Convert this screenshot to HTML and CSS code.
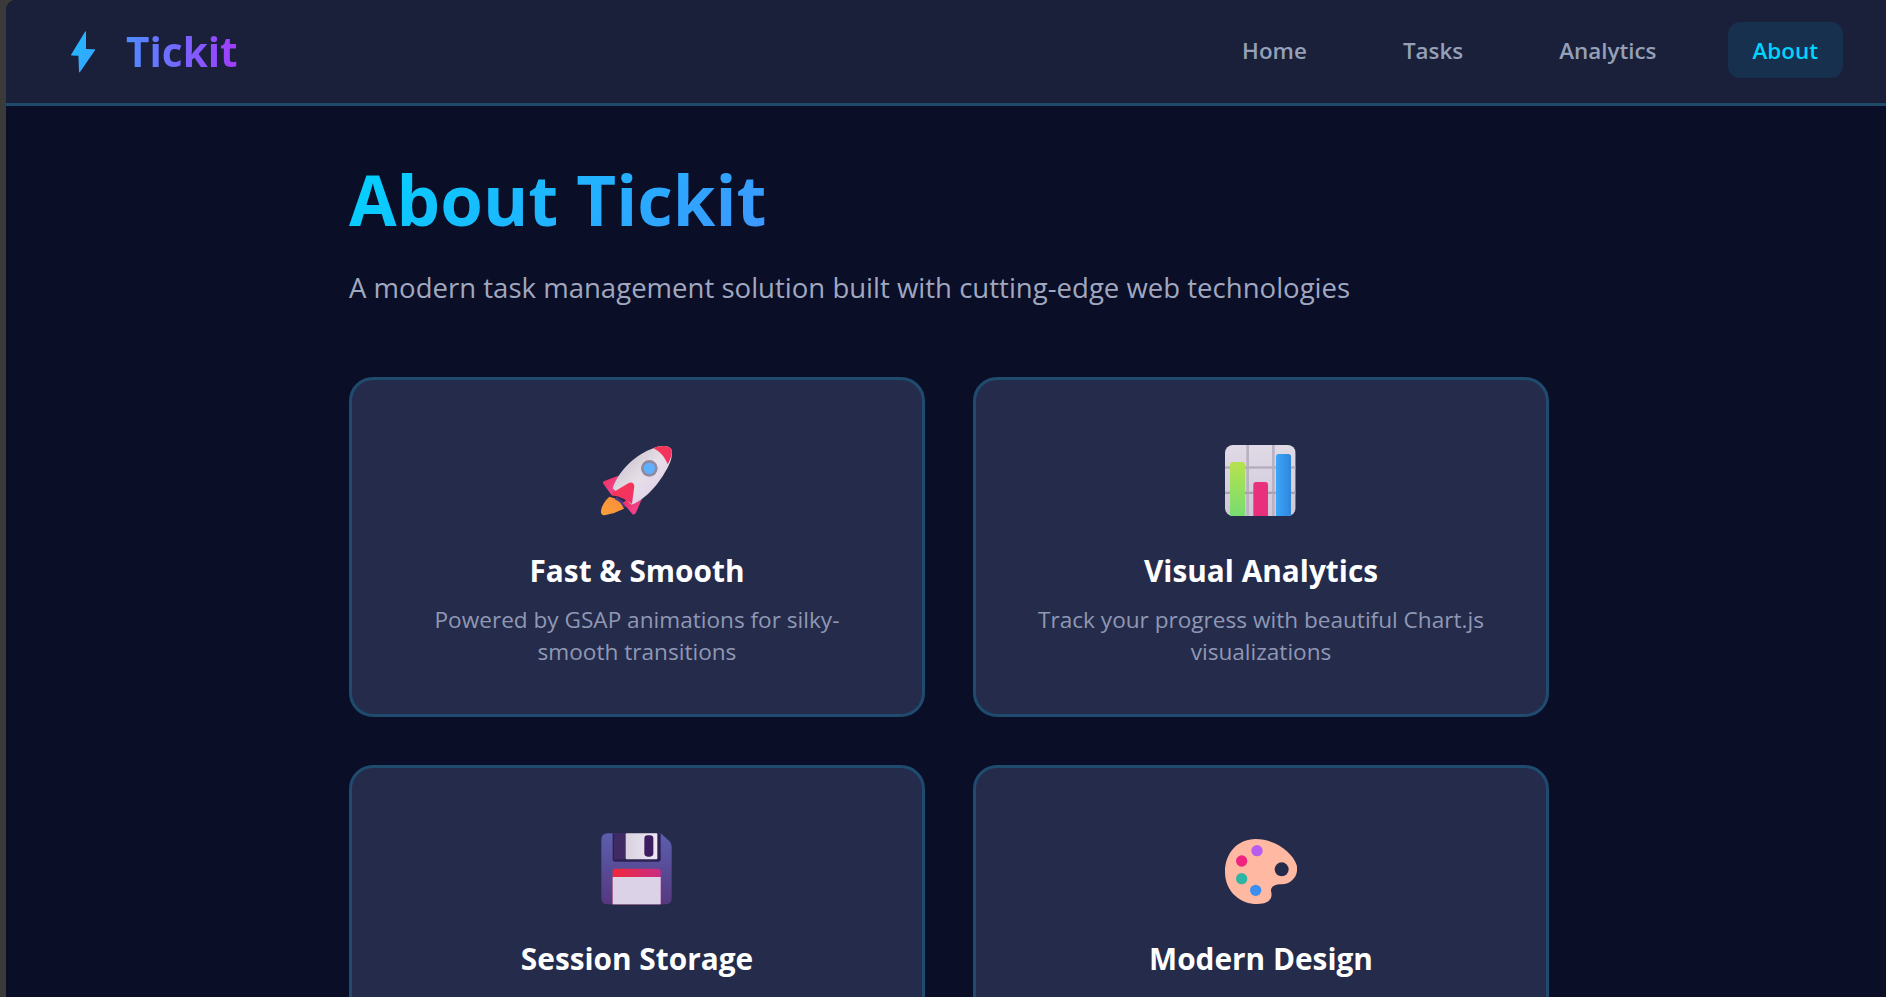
FILE: index.html
```html
<!DOCTYPE html>
<html lang="en">
<head>
    <meta charset="UTF-8">
    <title>Tickit - About</title>
    <link rel="stylesheet" href="styles.css">
</head>
<body>
    <div class="okno">
        <nav class="navbar">
            <div class="logo">
                <svg class="bolt" viewBox="71 32 24 42">
                    <defs>
                        <linearGradient id="boltGrad" x1="0" y1="0" x2="1" y2="1">
                            <stop offset="0" stop-color="#1fbcff"/>
                            <stop offset="1" stop-color="#3aa0ff"/>
                        </linearGradient>
                    </defs>
                    <path d="M85.2 32.4 Q86 31.8 86 33 L86 50 L94.6 50.2 Q95.4 50.6 95 51.2 L80 73 Q79.2 74 79 72.8 L78.4 56.8 L71.6 56.6 Q70.8 56.4 71.2 55.6 Z" fill="url(#boltGrad)"/>
                </svg>
                <span class="logo-text">Tickit</span>
            </div>
            <div class="nav-links">
                <a class="nav-link">Home</a>
                <a class="nav-link">Tasks</a>
                <a class="nav-link">Analytics</a>
                <a class="nav-link active">About</a>
            </div>
        </nav>

        <main class="content">
            <h1 class="title">About Tickit</h1>
            <p class="subtitle">A modern task management solution built with cutting-edge web technologies</p>

            <div class="cards">
                <div class="card">
                    <svg class="icon" viewBox="93 45 216 216">
                        <defs>
                            <linearGradient id="rocketBody" x1="0" y1="0" x2="1" y2="1">
                                <stop offset="0" stop-color="#bdb6c0"/>
                                <stop offset="0.5" stop-color="#e6dfe8"/>
                                <stop offset="1" stop-color="#dcc8ea"/>
                            </linearGradient>
                            <linearGradient id="rocketRed" x1="0" y1="0" x2="1" y2="1">
                                <stop offset="0" stop-color="#f9384f"/>
                                <stop offset="1" stop-color="#f0306a"/>
                            </linearGradient>
                            <linearGradient id="rocketFin" x1="0" y1="0" x2="1" y2="1">
                                <stop offset="0" stop-color="#f0305e"/>
                                <stop offset="1" stop-color="#f0489a"/>
                            </linearGradient>
                            <linearGradient id="rocketFlame" x1="1" y1="0" x2="0" y2="1">
                                <stop offset="0" stop-color="#f98a3a"/>
                                <stop offset="1" stop-color="#fba13a"/>
                            </linearGradient>
                        </defs>
                        <path d="M118 200 Q150 205 162 236 Q135 250 104 256 Q92 257 93 243 Q96 220 118 200Z" fill="url(#rocketFlame)"/>
                        <path d="M140 200 L172 224 L162 234 Q152 215 134 208Z" fill="#4b3a86"/>
                        <path d="M99 160 Q97 155 103 153 L145 137 L140 195 L122 192Z" fill="url(#rocketFin)"/>
                        <path d="M217 204 L197 250 Q192 256 187 252 L158 218 L185 200Z" fill="url(#rocketFin)"/>
                        <path d="M305 60 C300 45 270 45 250 55 C200 72 148 118 128 175 L185 224 C242 202 287 130 301 95 C305 85 307 70 305 60Z" fill="url(#rocketBody)"/>
                        <path d="M305 60 C300 45 270 45 250 55 C270 63 285 82 293 103 C303 85 307 70 305 60Z" fill="url(#rocketRed)"/>
                        <circle cx="238" cy="115" r="25" fill="#8f8aa3"/>
                        <circle cx="238" cy="115" r="17" fill="#5fb0ff"/>
                        <path d="M125 190 L176 159 Q190 153 193 168 L186 222 L162 207 Q142 196 128 197 Q120 195 125 190Z" fill="url(#rocketRed)"/>
                    </svg>
                    <h3 class="card-title">Fast &amp; Smooth</h3>
                    <p class="card-text">Powered by GSAP animations for silky-smooth transitions</p>
                </div>

                <div class="card">
                    <svg class="icon" viewBox="90 45 216 216">
                        <defs>
                            <linearGradient id="chartBg" x1="0" y1="0" x2="0" y2="1">
                                <stop offset="0" stop-color="#e0dae6"/>
                                <stop offset="1" stop-color="#cfc7d8"/>
                            </linearGradient>
                            <linearGradient id="chartGreen" x1="0" y1="0" x2="0" y2="1">
                                <stop offset="0" stop-color="#b6e24e"/>
                                <stop offset="1" stop-color="#74dc72"/>
                            </linearGradient>
                            <linearGradient id="chartBlue" x1="0" y1="0" x2="1" y2="0">
                                <stop offset="0" stop-color="#3aa6f8"/>
                                <stop offset="1" stop-color="#2f86dc"/>
                            </linearGradient>
                            <clipPath id="chartClip">
                                <rect x="90" y="45" width="212" height="213" rx="24"/>
                            </clipPath>
                        </defs>
                        <g clip-path="url(#chartClip)">
                            <rect x="90" y="45" width="212" height="213" fill="url(#chartBg)"/>
                            <rect x="154" y="45" width="8" height="213" fill="#b9b1c4"/>
                            <rect x="231" y="45" width="8" height="213" fill="#b9b1c4"/>
                            <rect x="90" y="109" width="212" height="7" fill="#b4acbf"/>
                            <rect x="90" y="185" width="212" height="7" fill="#a9a1b5"/>
                            <rect x="105" y="96" width="45" height="170" rx="8" fill="url(#chartGreen)"/>
                            <rect x="175" y="156" width="44" height="110" rx="8" fill="#e8307c"/>
                            <rect x="243" y="72" width="45" height="194" rx="8" fill="url(#chartBlue)"/>
                        </g>
                    </svg>
                    <h3 class="card-title">Visual Analytics</h3>
                    <p class="card-text">Track your progress with beautiful Chart.js visualizations</p>
                </div>

                <div class="card">
                    <svg class="icon" viewBox="93 38 216 216">
                        <defs>
                            <linearGradient id="diskBody" x1="0" y1="0" x2="0" y2="1">
                                <stop offset="0" stop-color="#5b5fae"/>
                                <stop offset="1" stop-color="#55387f"/>
                            </linearGradient>
                            <linearGradient id="diskRed" x1="0" y1="0" x2="1" y2="0">
                                <stop offset="0" stop-color="#f0283a"/>
                                <stop offset="1" stop-color="#c92c84"/>
                            </linearGradient>
                            <linearGradient id="diskMetal" x1="0" y1="0" x2="1" y2="0">
                                <stop offset="0" stop-color="#d8d2e0"/>
                                <stop offset="1" stop-color="#eee8f2"/>
                            </linearGradient>
                        </defs>
                        <path d="M113 39 L272 39 L298 62 Q305 68 305 78 L305 232 Q305 252 285 252 L113 252 Q94 252 94 232 L94 59 Q94 39 113 39Z" fill="url(#diskBody)"/>
                        <path d="M128 39 L272 39 L272 116 Q272 124 264 124 L136 124 Q128 124 128 116Z" fill="#2c2052"/>
                        <rect x="132" y="39" width="34" height="78" fill="#3f2a64"/>
                        <rect x="167" y="39" width="95" height="78" rx="3" fill="url(#diskMetal)"/>
                        <rect x="223" y="45" width="27" height="64" rx="10" fill="#3d1c60"/>
                        <path d="M128 252 L128 153 Q128 145 136 145 L264 145 Q272 145 272 153 L272 252Z" fill="url(#diskRed)"/>
                        <rect x="128" y="170" width="144" height="82" fill="#dcd2e8"/>
                    </svg>
                    <h3 class="card-title">Session Storage</h3>
                </div>

                <div class="card">
                    <svg class="icon" viewBox="88 39 216 216">
                        <path d="M180 57 C235 57 290 95 303 135 C310 165 290 192 258 193 C240 193 226 198 226 212 C230 228 228 243 205 250 C150 262 88 225 88 155 C88 100 125 57 180 57Z" fill="#ffb8a2"/>
                        <circle cx="258" cy="148" r="21" fill="#242a49"/>
                        <circle cx="184" cy="92" r="17" fill="#b85cf0"/>
                        <circle cx="138" cy="123" r="17" fill="#f0247f"/>
                        <circle cx="138" cy="176" r="17" fill="#2fb5a5"/>
                        <circle cx="180" cy="211" r="17" fill="#3b8ff0"/>
                    </svg>
                    <h3 class="card-title">Modern Design</h3>
                </div>
            </div>
        </main>
    </div>
</body>
</html>
```

FILE: styles.css
```css
*{
    box-sizing: border-box;
    margin: 0;
    padding: 0;
    font-family: "Open Sans", "Noto Sans", sans-serif;
}
html, body{
    height: 100%;
    overflow: hidden;
}
body{
    background-color: #3a3a3a;
    padding-left: 6px;
}
.okno{
    height: 100%;
    overflow: hidden;
    background-color: #0a0e27;
    border-top-left-radius: 10px;
}

.navbar{
    display: flex;
    justify-content: space-between;
    align-items: center;
    height: 106px;
    padding: 0 43px 0 65px;
    background-color: #1a1f3a;
    border-bottom: 3px solid #1f4a69;
}
.logo{
    display: flex;
    align-items: center;
    gap: 31px;
}
.bolt{
    width: 24px;
    height: 42px;
}
.logo-text{
    font-size: 40.5px;
    font-weight: 700;
    background: linear-gradient(90deg, #4f8cff, #a23cff);
    -webkit-background-clip: text;
    background-clip: text;
    color: transparent;
}
.nav-links{
    display: flex;
    align-items: center;
    gap: 46px;
    padding-bottom: 3px;
}
.nav-link{
    padding: 0 25px;
    height: 56px;
    display: flex;
    align-items: center;
    font-size: 22.4px;
    font-weight: 600;
    color: #94a0b8;
    border-radius: 12px;
}
.active{
    color: #00d4ff;
    background-color: #17304d;
}

.content{
    width: 1200px;
    margin: 0 auto;
    padding-top: 48px;
    transform: translateX(3px);
}
.title{
    font-size: 69px;
    line-height: 90px;
    font-weight: 700;
    background: linear-gradient(135deg, #00d4ff, #a033ff);
    -webkit-background-clip: text;
    background-clip: text;
    color: transparent;
}
.subtitle{
    margin-top: 24px;
    font-size: 27.55px;
    line-height: 40px;
    color: #a0a8c0;
}
.cards{
    display: grid;
    grid-template-columns: 1fr 1fr;
    gap: 48px;
    margin-top: 69px;
}
.card{
    display: flex;
    flex-direction: column;
    align-items: center;
    padding: 65px 60px 0;
    min-height: 340px;
    text-align: center;
    background-color: #252b4a;
    border: 3px solid #1f4b6e;
    border-radius: 24px;
}
.icon{
    width: 72px;
    height: 72px;
    flex-shrink: 0;
}
.card-title{
    margin-top: 34px;
    font-size: 29.8px;
    line-height: 40px;
    font-weight: 700;
    color: white;
}
.card-text{
    margin-top: 13px;
    font-size: 22.6px;
    line-height: 32px;
    color: #8f98b4;
}
```
